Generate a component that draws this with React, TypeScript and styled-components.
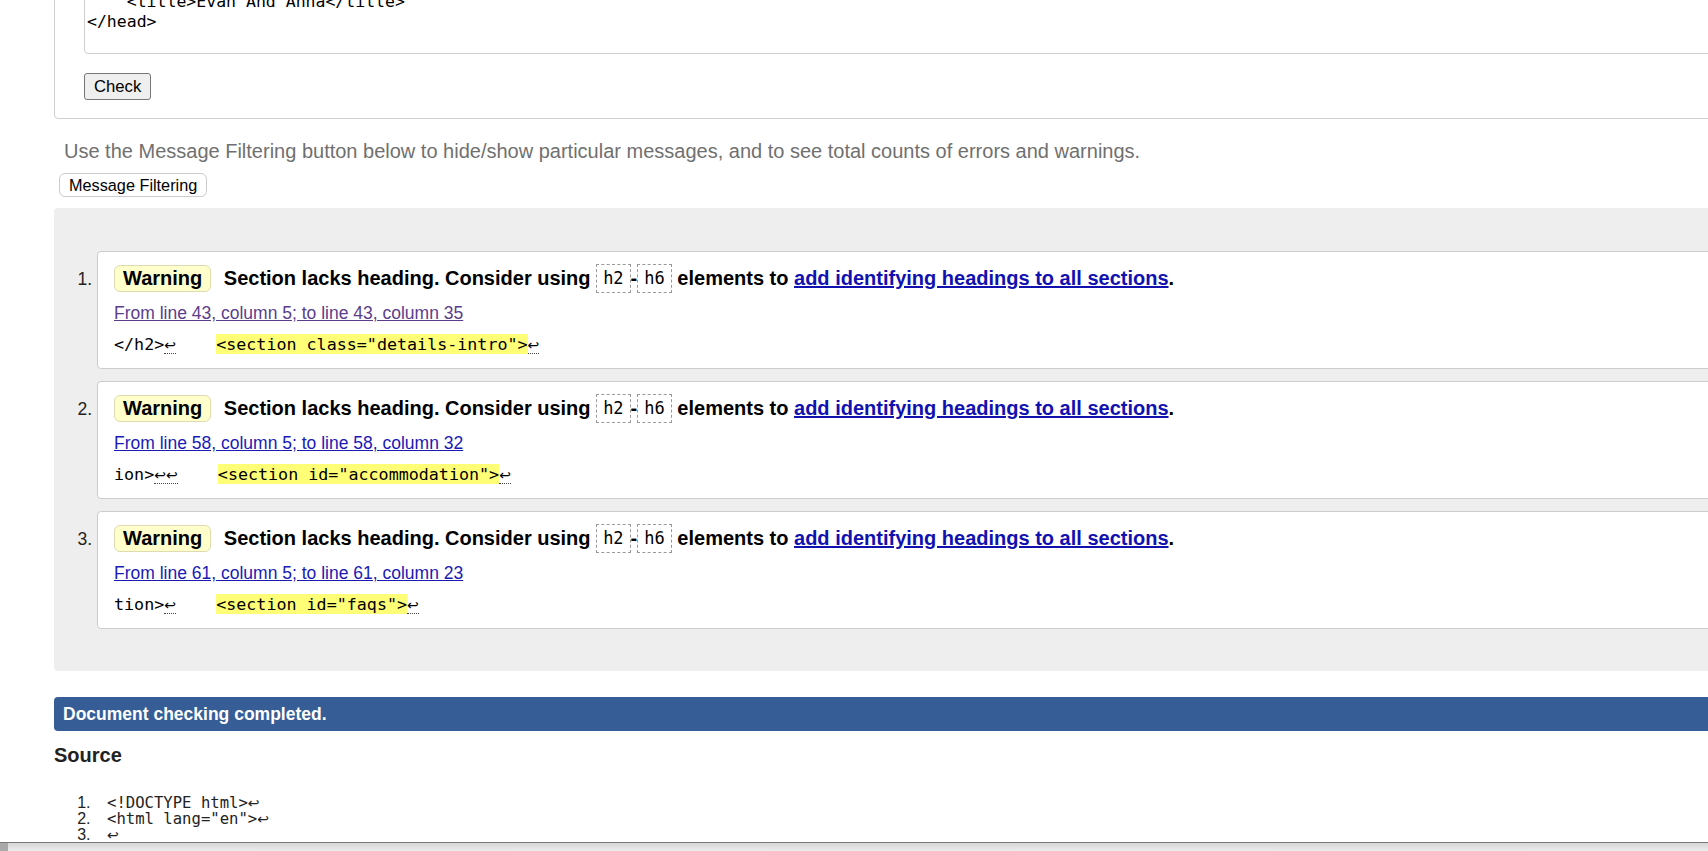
import React from "react";
import styled, { createGlobalStyle } from "styled-components";

const sans = `"Liberation Sans", Arial, sans-serif`;
const mono = `"DejaVu Sans Mono", "Liberation Mono", monospace`;
const arrowFont = `"DejaVu Sans", "DejaVu Sans Mono", sans-serif`;

const GlobalStyle = createGlobalStyle`
  html, body { margin: 0; padding: 0; background: #fff; }
  body { overflow: hidden; font-family: ${sans}; color: #000; }
`;

const Screen = styled.div`
  width: 100%;
  height: 851px;
  display: flex;
  flex-direction: column;
  overflow: hidden;
`;

const Viewport = styled.div`
  flex: 1;
  min-height: 0;
  overflow: hidden;
`;

const Page = styled.main`
  width: 1900px;
  margin-top: -30px;
  padding-left: 54px;
`;

const Fieldset = styled.div`
  border: 1px solid #cfcfcf;
  border-radius: 4px;
  padding: 0 0 18px 29px;
`;

const SourceBox = styled.textarea`
  display: block;
  box-sizing: border-box;
  width: 1800px;
  height: 83px;
  margin: 0;
  padding: 20px 6px 21px 2px;
  border: 1px solid #cfcfcf;
  border-radius: 4px;
  font-family: ${mono};
  font-size: 16.5px;
  line-height: 20px;
  color: #000;
  background: #fff;
  resize: none;
  overflow: hidden;
  outline: none;
`;

const CheckButton = styled.button`
  display: block;
  margin-top: 19px;
  height: 27px;
  padding: 0 9px;
  font-family: ${sans};
  font-size: 16.67px;
  color: #000;
  background: #efefef;
  border: 1px solid #767676;
  border-radius: 3px;
`;

const Hint = styled.p`
  margin: 21px 0 0 10px;
  font-size: 20px;
  line-height: 23px;
  color: #707070;
`;

const FilterButton = styled.button`
  display: block;
  margin: 10px 0 0 5px;
  height: 24px;
  padding: 0 9px;
  font-family: ${sans};
  font-size: 16.25px;
  color: #000;
  background: #fff;
  border: 1px solid #cccccc;
  border-radius: 6px;
`;

const Results = styled.section`
  margin-top: 11px;
  padding: 43px 0 42px;
  background: #eeeeee;
  border-radius: 4px;
`;

const MessageList = styled.ol`
  margin: 0;
  padding-left: 43px;
  list-style: decimal outside;
`;

const Message = styled.li`
  background: #fff;
  border: 1px solid #cccccc;
  border-radius: 4px;
  padding: 13px 16px 13px 16px;
  font-size: 17.5px;
  color: #222;
  & + & { margin-top: 12px; }
  &::marker { font-family: ${sans}; color: #222; }
`;

const TitleLine = styled.p`
  margin: 0;
  font-size: 20px;
  line-height: 27px;
  font-weight: bold;
  color: #000;
  white-space: nowrap;
`;

const Badge = styled.span`
  display: inline-block;
  box-sizing: border-box;
  height: 27px;
  padding: 0 8px;
  margin-right: 7px;
  line-height: 25px;
  vertical-align: top;
  background: #ffffcc;
  border: 1px solid #dedbb0;
  border-radius: 6px;
  color: #000;
`;

const Code = styled.code`
  display: inline-block;
  box-sizing: border-box;
  height: 29px;
  margin-top: -1px;
  padding: 0 6px;
  line-height: 27px;
  vertical-align: top;
  font-family: ${mono};
  font-size: 17px;
  font-weight: normal;
  border: 1px dashed #999;
`;

const TitleLink = styled.a`
  color: #1111b0;
  text-decoration: underline;
`;

const Location = styled.p`
  margin: 10px 0 0;
  line-height: 20px;
`;

const LocLink = styled.a<{ $visited?: boolean }>`
  color: ${(p) => (p.$visited ? "#5b3d8c" : "#1a1ab4")};
  text-decoration: underline;
`;

const Extract = styled.p`
  margin: 10px 0 0;
  height: 22px;
  font-family: ${mono};
  font-size: 16.7px;
  line-height: 22px;
  white-space: pre;
  color: #000;
`;

const LineBreak = styled.span`
  font-family: ${arrowFont};
  font-size: 14px;
  line-height: 0;
  border-bottom: 1px dotted #444;
`;

const Highlight = styled.mark`
  background: #ffff77;
  color: #000;
`;

const DoneBar = styled.p`
  margin: 26px 0 0;
  height: 34px;
  padding-left: 9px;
  line-height: 34px;
  font-size: 17.5px;
  font-weight: bold;
  color: #fff;
  background: #365d95;
  border-radius: 4px;
`;

const SourceHeading = styled.h2`
  margin: 13px 0 0;
  font-size: 20px;
  line-height: 23px;
  font-weight: bold;
  color: #222;
`;

const SourceList = styled.ol`
  margin: 28px 0 0;
  padding-left: 41px;
  font-family: ${mono};
  font-size: 15.6px;
  line-height: 16px;
  color: #222;
  white-space: pre;
`;

const SourceLine = styled.li`
  height: 16px;
  padding-left: 12px;
  &::marker { font-family: ${sans}; font-size: 16px; }
`;

const SourceArrow = styled.span`
  font-family: ${arrowFont};
  font-size: 14px;
  line-height: 0;
`;

const HScrollbar = styled.div`
  flex: 0 0 8px;
  display: flex;
  border-top: 1px solid #7a7a7a;
  background: linear-gradient(#d6d6d6, #ececec);
`;

const ScrollArrow = styled.div`
  width: 8px;
  background: #a9a9a9;
`;

type Msg = {
  loc: string;
  visited?: boolean;
  before: string;
  breaks: string;
  tag: string;
};

const messages: Msg[] = [
  {
    loc: "From line 43, column 5; to line 43, column 35",
    visited: true,
    before: "</h2>",
    breaks: "↩",
    tag: '<section class="details-intro">',
  },
  {
    loc: "From line 58, column 5; to line 58, column 32",
    before: "ion>",
    breaks: "↩↩",
    tag: '<section id="accommodation">',
  },
  {
    loc: "From line 61, column 5; to line 61, column 23",
    before: "tion>",
    breaks: "↩",
    tag: '<section id="faqs">',
  },
];

const sourceLines = ["<!DOCTYPE html>", '<html lang="en">', ""];

export default function App() {
  return (
    <>
      <GlobalStyle />
      <Screen>
        <Viewport>
          <Page>
            <Fieldset>
              <SourceBox
                readOnly
                value={"    <title>Evan And Anna</title>\n</head>"}
              />
              <CheckButton>Check</CheckButton>
            </Fieldset>
            <Hint>
              Use the Message Filtering button below to hide/show particular messages, and to see total
              counts of errors and warnings.
            </Hint>
            <FilterButton>Message Filtering</FilterButton>
            <Results>
              <MessageList>
                {messages.map((m) => (
                  <Message key={m.loc}>
                    <TitleLine>
                      <Badge>Warning</Badge> Section lacks heading. Consider using <Code>h2</Code>-
                      <Code>h6</Code> elements to{" "}
                      <TitleLink href="#">add identifying headings to all sections</TitleLink>.
                    </TitleLine>
                    <Location>
                      <LocLink href="#" $visited={m.visited}>
                        {m.loc}
                      </LocLink>
                    </Location>
                    <Extract>
                      {m.before}
                      <LineBreak>{m.breaks}</LineBreak>
                      {"    "}
                      <Highlight>{m.tag}</Highlight>
                      <LineBreak>↩</LineBreak>
                    </Extract>
                  </Message>
                ))}
              </MessageList>
            </Results>
            <DoneBar>Document checking completed.</DoneBar>
            <SourceHeading>Source</SourceHeading>
            <SourceList>
              {sourceLines.map((line, i) => (
                <SourceLine key={i}>
                  {line}
                  <SourceArrow>↩</SourceArrow>
                </SourceLine>
              ))}
            </SourceList>
          </Page>
        </Viewport>
        <HScrollbar>
          <ScrollArrow />
        </HScrollbar>
      </Screen>
    </>
  );
}
